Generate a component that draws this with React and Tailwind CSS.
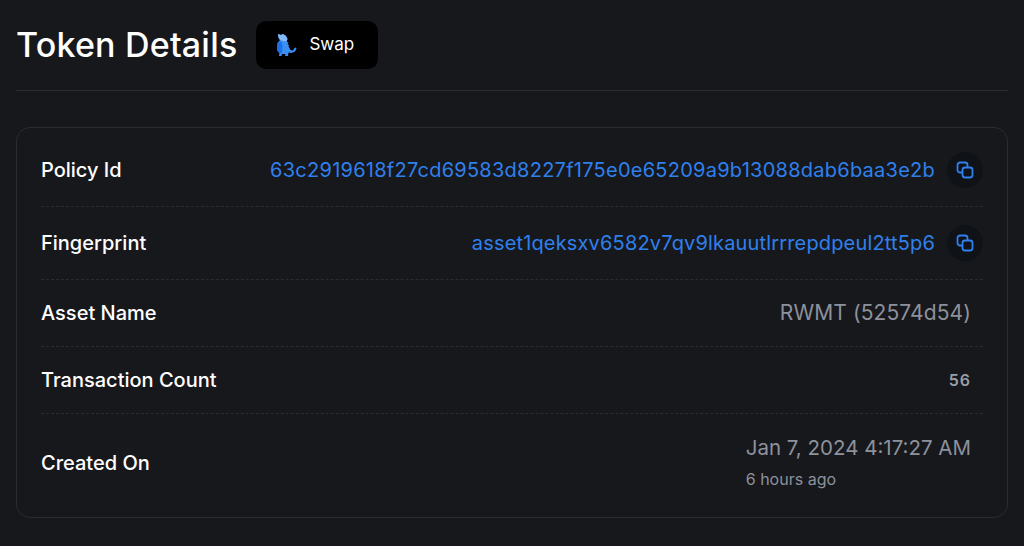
const sans = "font-['Inter','Liberation_Sans',sans-serif]";

function Dino() {
  return (
    <svg width="24" height="26" viewBox="0 0 24 26" className="block">
      <path d="M4 2l3 1 2-1 3 2 1.500 3-1 2.500 2 1-1 1.500 1.500 1-.5 1.500 1 1.500 1 2 2.500.5 1.500-2.500 1.500-.5.5 1-1.500 3-3.500 1.500-3-.5-.5 3.500H11l.5-2H8l-.5 2H5l.5-3L3 18l.5-7L6 8 4.500 5.500z" fill="#3b8ff2" />
      <path d="M4 2l3 1 2-1 3 2 1.500 3-1 2.500L9 9 6 8 4.500 5.500z" fill="#82b9f8" />
      <path d="M3.500 11L7 9l1.500 5-.5 6.500-2.500 1L3 18z" fill="#1c6fe6" />
    </svg>
  );
}

function CopyButton() {
  return (
    <button className="w-9 h-9 shrink-0 rounded-full bg-[#0f1217] flex items-center justify-center text-[#2f80ed]">
      <svg width="18" height="18" viewBox="0 0 18 18" fill="none" stroke="currentColor" strokeWidth="1.8">
        <rect x="1.500" y="1.500" width="10" height="10" rx="2.500" />
        <rect x="6.500" y="6.500" width="10" height="10" rx="2.500" fill="#0f1217" />
      </svg>
    </button>
  );
}

function Row({ label, height, last, children }) {
  return (
    <div className={`flex items-center justify-between ${height} ${last ? '' : 'border-b border-dashed border-[#2a2c31]'}`}>
      <span className="text-[20px] font-medium text-white">{label}</span>
      {children}
    </div>
  );
}

function LinkValue({ spacing, children }) {
  return (
    <div className="flex items-center gap-3">
      <span className={`text-[#2f80ed] text-[20px] ${spacing}`}>{children}</span>
      <CopyButton />
    </div>
  );
}

export default function App() {
  return (
    <div className={`${sans} w-[1024px] h-[546px] overflow-hidden bg-[#17181c] px-4`}>
      <div className="flex items-center gap-[19px] h-[91px] border-b border-[#2a2c31] pb-[1px]">
        <h1 className="text-[34px] font-medium text-white tracking-[0.2px]">Token Details</h1>
        <button className="w-[122px] h-12 rounded-[10px] bg-black flex items-center gap-[11px] pl-[18px] text-white text-[17px]">
          <Dino />
          <span className="pt-[1px]">Swap</span>
        </button>
      </div>

      <div className="mt-9 h-[391px] rounded-[14px] border border-[#2a2c31] px-6">
        <Row label="Policy Id" height="h-[79px] pt-[6px]">
          <LinkValue spacing="tracking-[0.25px]">63c2919618f27cd69583d8227f175e0e65209a9b13088dab6baa3e2b</LinkValue>
        </Row>
        <Row label="Fingerprint" height="h-[73px]">
          <LinkValue spacing="tracking-[0.16px]">asset1qeksxv6582v7qv9lkauutlrrrepdpeul2tt5p6</LinkValue>
        </Row>
        <Row label="Asset Name" height="h-[67px]">
          <span className="mr-3 text-[21px] tracking-[0.1px] text-[#8d919c]">RWMT (52574d54)</span>
        </Row>
        <Row label="Transaction Count" height="h-[67px]">
          <span className="mr-3 text-[16px] font-semibold tracking-[1px] text-[#9a9ea8]">56</span>
        </Row>
        <Row label="Created On" height="h-[103px] pb-[5px]" last>
          <div className="mr-3 flex flex-col -mt-[3px]">
            <span className="text-[20.5px] text-[#8d919c] leading-7">Jan 7, 2024 4:17:27 AM</span>
            <span className="mt-[7px] text-[16px] text-[#8d919c] leading-5">6 hours ago</span>
          </div>
        </Row>
      </div>
    </div>
  );
}
